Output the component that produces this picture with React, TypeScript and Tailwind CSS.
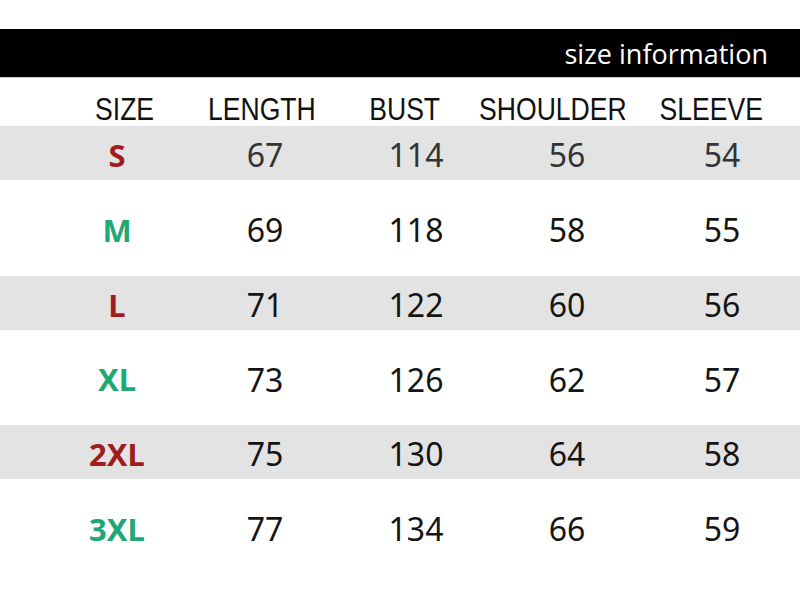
const rows = [
  { size: 'S', color: 'text-[#a11d1d]', vals: ['67', '114', '56', '54'], gray: true, h: 'h-[54px]' },
  { size: 'M', color: 'text-[#1fa874]', vals: ['69', '118', '58', '55'], gray: false, h: 'h-[96px]' },
  { size: 'L', color: 'text-[#a11d1d]', vals: ['71', '122', '60', '56'], gray: true, h: 'h-[54px]' },
  { size: 'XL', color: 'text-[#1fa874]', vals: ['73', '126', '62', '57'], gray: false, h: 'h-[95px]' },
  { size: '2XL', color: 'text-[#a11d1d]', vals: ['75', '130', '64', '58'], gray: true, h: 'h-[54px]' },
  { size: '3XL', color: 'text-[#1fa874]', vals: ['77', '134', '66', '59'], gray: false, h: 'h-[96px]' },
]

const headers = ['SIZE', 'LENGTH', 'BUST', 'SHOULDER', 'SLEEVE']
// header cells are 100px wide, centred at 125 / 262 / 405 / 553 / 711
const headGaps = ['', 'ml-[37px]', 'ml-[43px]', 'ml-[48px]', 'ml-[58px]']
// data cells are 120px wide, centred at 117 / 265 / 416 / 567 / 722
const dataGaps = ['ml-[28px]', 'ml-[31px]', 'ml-[31px]', 'ml-[35px]']

export default function App() {
  return (
    <div className="w-[800px] h-[596px] bg-white overflow-hidden pt-[29px] font-['Noto_Sans',sans-serif]">
      {/* title bar */}
      <div className="h-[49px] bg-black border-b border-[#c8c8c8] flex items-center justify-end pr-[32px]">
        <span className="text-white text-[27px] font-['Open_Sans',sans-serif] leading-none">size information</span>
      </div>

      {/* header row */}
      <div className="h-[48px] flex items-start pt-[15px] pl-[75px] font-['Liberation_Sans',sans-serif] text-[32px] leading-none text-[#111]">
        {headers.map((h, i) => (
          <div key={h} className={`w-[100px] flex justify-center ${headGaps[i]}`}>
            <span className="scale-x-[0.83] whitespace-nowrap">{h}</span>
          </div>
        ))}
      </div>

      {rows.map((r, ri) => (
        <div key={r.size} className={`${r.h} ${r.gray ? 'bg-[#e3e3e3]' : 'bg-white'} flex items-center pt-[4px] pl-[57px]`}>
          <div className={`w-[120px] flex justify-center text-[31px] font-bold ${r.color}`}>{r.size}</div>
          {r.vals.map((v, i) => (
            <div
              key={i}
              className={`w-[120px] flex justify-center text-[32px] ${ri === 0 ? 'text-[#333]' : 'text-[#141414]'} ${dataGaps[i]}`}
            >
              {v}
            </div>
          ))}
        </div>
      ))}
    </div>
  )
}
